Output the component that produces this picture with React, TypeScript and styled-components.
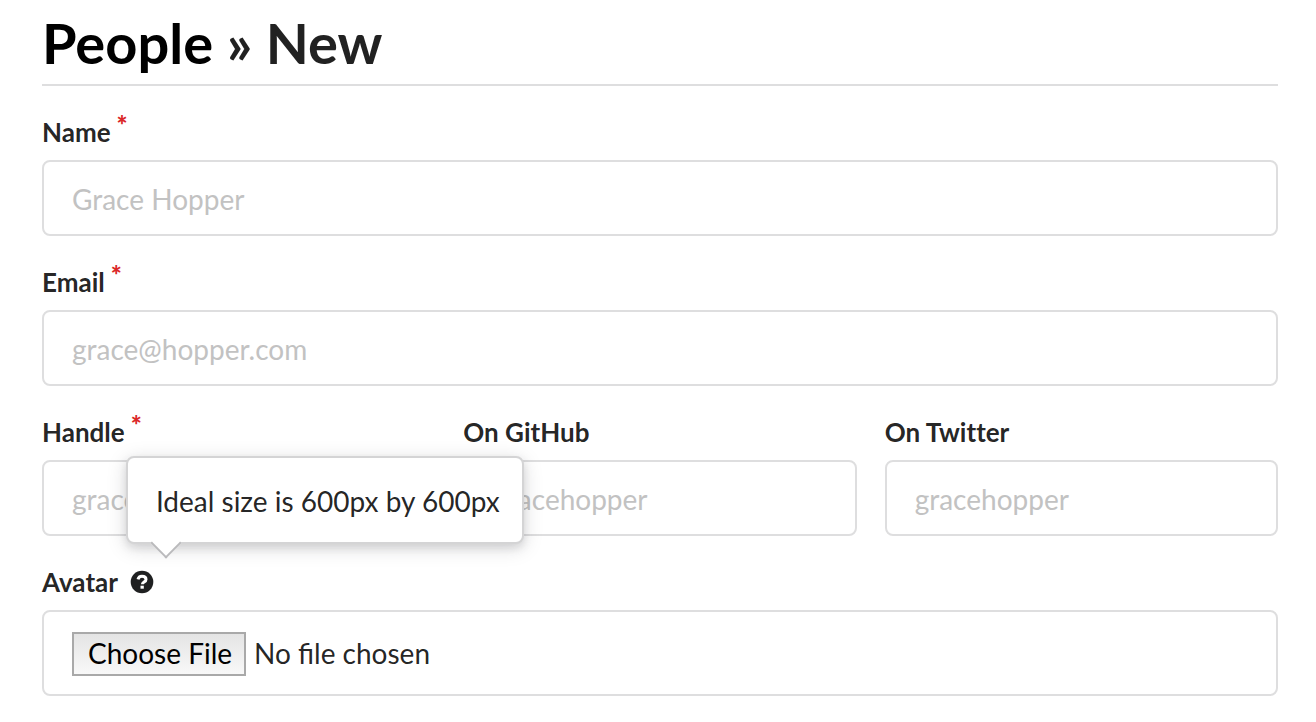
import React from 'react';
import styled, { createGlobalStyle } from 'styled-components';

const GlobalStyle = createGlobalStyle`
  * { box-sizing: border-box; }
  body {
    margin: 0;
    background: #fff;
    color: rgba(0, 0, 0, 0.87);
    font-family: Lato, "Liberation Sans", sans-serif;
    font-size: 28px;
  }
`;

const Page = styled.main`
  padding: 12px 38px 26px 42px;
`;

const Title = styled.h1`
  margin: 0 0 28px;
  padding-bottom: 10px;
  border-bottom: 2px solid #dededf;
  font-size: 56px;
  line-height: 62px;
  font-weight: 700;
`;

const TitleLink = styled.a`
  color: #000;
  text-decoration: none;
`;

const Form = styled.form`
  display: flex;
  flex-direction: column;
  gap: 28px;
`;

const FieldRow = styled.div`
  display: grid;
  grid-template-columns: repeat(3, 1fr);
  gap: 28px;
`;

const FieldBox = styled.div`
  display: flex;
  flex-direction: column;
  gap: 10px;
  min-width: 0;
`;

const LabelLine = styled.div`
  display: flex;
  align-items: center;
  gap: 12px;
  height: 36px;
`;

const Label = styled.label<{ $required?: boolean }>`
  font-size: 26px;
  line-height: 36px;
  font-weight: 700;
  font-variant-ligatures: none;
  &::after {
    content: ${(p) => (p.$required ? '"*"' : 'none')};
    margin-left: 6px;
    color: #db2828;
    font-weight: 900;
    vertical-align: top;
    line-height: 22px;
  }
`;

const TextInput = styled.input`
  width: 100%;
  height: 76px;
  padding: 2px 28px 0;
  border: 2px solid #dededf;
  border-radius: 8px;
  background: #fff;
  color: inherit;
  font: inherit;
  &::placeholder {
    color: #c2c2c2;
    opacity: 1;
  }
`;

const FileInput = styled.input`
  width: 100%;
  height: 86px;
  padding: 20px 28px;
  border: 2px solid #dededf;
  border-radius: 8px;
  font: inherit;
  line-height: 40px;
  &::file-selector-button {
    height: 44px;
    margin: 0 8px 0 0;
    padding: 0 12px 2px 14px;
    border: 2px solid #a9a9a9;
    border-radius: 0;
    background: linear-gradient(#e4e4e4, #f8f8f8);
    color: #000;
    font: inherit;
    line-height: 36px;
  }
`;

const HelpAnchor = styled.span`
  position: relative;
  display: flex;
`;

const Tooltip = styled.span`
  position: absolute;
  bottom: calc(100% + 26px);
  left: -4px;
  padding: 23px 22px 21px 28px;
  border: 2px solid #d4d4d5;
  border-radius: 8px;
  background: #fff;
  box-shadow: 0 4px 8px rgba(34, 36, 38, 0.12), 0 4px 20px rgba(34, 36, 38, 0.15);
  line-height: 40px;
  white-space: nowrap;
  &::after {
    content: "";
    position: absolute;
    top: calc(100% - 10px);
    left: 27px;
    width: 20px;
    height: 20px;
    background: #fff;
    border: solid #bababc;
    border-width: 0 2px 2px 0;
    transform: rotate(45deg);
  }
`;

type FieldProps = { id: string; label: string; placeholder: string; type?: string; required?: boolean };

function Field({ id, label, placeholder, type = 'text', required }: FieldProps) {
  return (
    <FieldBox>
      <LabelLine>
        <Label htmlFor={id} $required={required}>{label}</Label>
      </LabelLine>
      <TextInput id={id} type={type} placeholder={placeholder} required={required} />
    </FieldBox>
  );
}

function HelpIcon() {
  return (
    <svg width="24" height="24" viewBox="0 0 24 24" aria-hidden="true">
      <circle cx="12" cy="12" r="11.300" fill="#1f2021" />
      <path d="M8 9.4C8.5 7.100 10 6.300 12 6.300c2.300 0 4 1.200 4 3.100 0 2.600-3.600 2.600-3.600 4.800" fill="none" stroke="#fff" strokeWidth="3" />
      <rect x="10.500" y="15.700" width="3.300" height="3" fill="#fff" />
    </svg>
  );
}

export default function App() {
  return (
    <Page>
      <GlobalStyle />
      <Title><TitleLink href="#people">People</TitleLink> » New</Title>
      <Form>
        <Field id="name" label="Name" placeholder="Grace Hopper" required />
        <Field id="email" label="Email" type="email" placeholder="grace@hopper.com" required />
        <FieldRow>
          <Field id="handle" label="Handle" placeholder="gracehopper" required />
          <Field id="github" label="On GitHub" placeholder="gracehopper" />
          <Field id="twitter" label="On Twitter" placeholder="gracehopper" />
        </FieldRow>
        <FieldBox>
          <LabelLine>
            <Label htmlFor="avatar">Avatar</Label>
            <HelpAnchor>
              <HelpIcon />
              <Tooltip role="tooltip" id="avatar-help">Ideal size is 600px by 600px</Tooltip>
            </HelpAnchor>
          </LabelLine>
          <FileInput id="avatar" type="file" aria-describedby="avatar-help" />
        </FieldBox>
      </Form>
    </Page>
  );
}
